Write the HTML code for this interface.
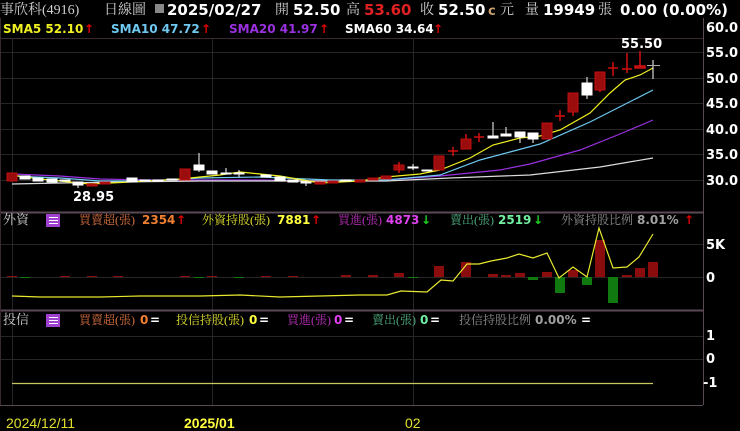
<!DOCTYPE html>
<html><head><meta charset="utf-8"><style>
html,body{margin:0;padding:0;background:#000;width:740px;height:431px;overflow:hidden}
svg{display:block}
text{font-family:"DejaVu Sans","Liberation Sans","Noto Sans CJK TC",sans-serif;font-weight:bold}
.c{font-family:"Liberation Serif","Noto Serif CJK SC","Noto Sans CJK TC",serif;font-weight:normal}
.d{font-family:"Liberation Sans Narrow","Liberation Sans",sans-serif;font-weight:normal}
</style></head><body>
<svg width="740" height="431" viewBox="0 0 740 431" xmlns="http://www.w3.org/2000/svg">
<rect width="740" height="431" fill="#000"/>
<!-- grid -->
<g stroke="#262626" stroke-width="1">
<line x1="0" y1="52.5" x2="703" y2="52.5"/><line x1="0" y1="78.5" x2="703" y2="78.5"/>
<line x1="0" y1="103.5" x2="703" y2="103.5"/><line x1="0" y1="129.5" x2="703" y2="129.5"/><line x1="0" y1="154.5" x2="703" y2="154.5"/><line x1="0" y1="180.5" x2="703" y2="180.5"/>
<line x1="0" y1="244.5" x2="703" y2="244.5"/><line x1="0" y1="277.5" x2="703" y2="277.5"/>
<line x1="0" y1="336.5" x2="703" y2="336.5"/><line x1="0" y1="359.5" x2="703" y2="359.5"/>
<line x1="12.5" y1="38" x2="12.5" y2="405"/><line x1="212.5" y1="38" x2="212.5" y2="405"/><line x1="413.5" y1="38" x2="413.5" y2="405"/>
</g>
<line x1="0" y1="38.5" x2="703" y2="38.5" stroke="#3a2a30"/>
<line x1="703.5" y1="18" x2="703.5" y2="405" stroke="#5a4a55"/>
<line x1="0" y1="212.5" x2="703" y2="212.5" stroke="#5a4a55" stroke-width="2"/>
<line x1="0" y1="310.5" x2="703" y2="310.5" stroke="#5a4a55" stroke-width="2"/>
<line x1="0" y1="405.5" x2="703" y2="405.5" stroke="#5a4a55"/>
<line x1="0.5" y1="18" x2="0.5" y2="405" stroke="#3a2a30"/>
<!-- header -->
<text x="0" y="14" class="c" font-size="14" fill="#cfcfcf">事欣科(4916)</text>
<text x="104" y="14" class="c" font-size="14" fill="#cfcfcf">日線圖</text>
<rect x="155" y="4" width="9" height="9" fill="#888"/>
<text x="167" y="15" font-size="15" fill="#fff">2025/02/27</text>
<text x="275" y="14" class="c" font-size="14" fill="#cfcfcf">開</text>
<text x="293" y="15" font-size="15" fill="#fff">52.50</text>
<text x="346" y="14" class="c" font-size="14" fill="#cfcfcf">高</text>
<text x="364" y="15" font-size="15" fill="#e02020">53.60</text>
<text x="420" y="14" class="c" font-size="14" fill="#cfcfcf">收</text>
<text x="438" y="15" font-size="15" fill="#fff">52.50</text>
<text x="488" y="15" font-size="13" fill="#c8a070">c</text>
<text x="500" y="14" class="c" font-size="14" fill="#cfcfcf">元</text>
<text x="525" y="14" class="c" font-size="14" fill="#cfcfcf">量</text>
<text x="543" y="15" font-size="15" fill="#fff">19949</text>
<text x="598" y="14" class="c" font-size="14" fill="#cfcfcf">張</text>
<text x="620" y="15" font-size="15" fill="#fff">0.00 (0.00%)</text>
<!-- SMA legend -->
<text x="3" y="33" font-size="12" fill="#f0f020">SMA5 52.10</text><text x="84" y="33" font-size="12" fill="#e00000">↑</text>
<text x="111" y="33" font-size="12" fill="#6ec8f0">SMA10 47.72</text><text x="201" y="33" font-size="12" fill="#e00000">↑</text>
<text x="229" y="33" font-size="12" fill="#9a30e0">SMA20 41.97</text><text x="319" y="33" font-size="12" fill="#e00000">↑</text>
<text x="345" y="33" font-size="12" fill="#fff">SMA60 34.64</text><text x="433" y="33" font-size="12" fill="#e00000">↑</text>
<!-- price axis -->
<g font-size="13" fill="#fff">
<text x="706" y="32">60.0</text><text x="706" y="57">55.0</text><text x="706" y="83">50.0</text><text x="706" y="108">45.0</text><text x="706" y="134">40.0</text><text x="706" y="159">35.0</text><text x="706" y="185">30.0</text>
<text x="706" y="249">5K</text><text x="706" y="282">0</text>
<text x="706" y="340">1</text><text x="706" y="363">0</text><text x="703" y="387">-1</text>
</g>
<!-- MAs -->
<polyline fill="none" stroke="#9a30e0" stroke-width="1.2" points="12,174 60,176 100,179 150,180 200,180 260,180 320,181 386,180 440,176 500,170 530,164 580,150 620,134 653,120"/>
<polyline fill="none" stroke="#ddd" stroke-width="1.2" points="12,184 60,183 120,182 200,181 300,181 386,181 450,178 530,175 600,167 653,158"/>
<polyline fill="none" stroke="#6ec8f0" stroke-width="1.2" points="12,176 60,178 100,181 150,181 200,178 260,177 330,180 386,180 440,175 480,160 510,152 540,144 590,122 653,90"/>
<polyline fill="none" stroke="#f0f020" stroke-width="1.2" points="12,175 40,179 90,184 130,182 180,179 220,175 240,172 280,176 320,183 360,181 386,177 420,174 440,170 470,158 493,145 520,138 540,136 560,130 590,113 610,93 625,80 640,75 653,68"/>
<!-- candles -->
<g fill="#9b0c0c" stroke="#c01010" stroke-width="1">
<rect x="7" y="173" width="10" height="8"/><rect x="87" y="184" width="10" height="2"/><rect x="100" y="182" width="10" height="2"/>
<rect x="180" y="169" width="10" height="11"/><rect x="315" y="182" width="10" height="2"/><rect x="328" y="181" width="10" height="2"/><rect x="355" y="180" width="10" height="2"/><rect x="368" y="178" width="10" height="2"/>
<rect x="381" y="176" width="10" height="3"/><rect x="394" y="165" width="10" height="5"/>
<rect x="434" y="156" width="10" height="14"/><rect x="461" y="139" width="10" height="10"/>
<rect x="542" y="123" width="10" height="16"/><rect x="568" y="93" width="10" height="19"/><rect x="595" y="72" width="10" height="18"/>
</g>
<g stroke="#d01010" stroke-width="1.5">
<line x1="399" y1="162" x2="399" y2="173"/><line x1="453" y1="147" x2="453" y2="156"/><line x1="448" y1="151" x2="458" y2="151"/>
<line x1="466" y1="134" x2="466" y2="139"/><line x1="479" y1="133" x2="479" y2="142"/><line x1="474" y1="137" x2="484" y2="137"/>
<line x1="560" y1="110" x2="560" y2="121"/><line x1="555" y1="116" x2="565" y2="116"/><line x1="573" y1="112" x2="573" y2="116"/>
<line x1="600" y1="90" x2="600" y2="92"/><line x1="613" y1="62" x2="613" y2="76"/><line x1="608" y1="68" x2="618" y2="68"/>
<line x1="627" y1="53" x2="627" y2="73"/><line x1="622" y1="69" x2="632" y2="69"/><line x1="640" y1="51" x2="640" y2="68"/><rect x="635" y="66" width="10" height="2" fill="#9b0c0c"/>
</g>
<g fill="#fff" stroke="#fff" stroke-width="1">
<rect x="20" y="176" width="10" height="3"/><rect x="33" y="178" width="10" height="3"/><rect x="47" y="179" width="10" height="3"/><rect x="60" y="180" width="10" height="1"/>
<rect x="73" y="182" width="10" height="3"/><line x1="78" y1="185" x2="78" y2="188"/>
<rect x="127" y="178" width="10" height="4"/><rect x="140" y="180" width="10" height="1"/><rect x="153" y="180" width="10" height="1"/><rect x="167" y="179" width="10" height="1"/>
<rect x="194" y="165" width="10" height="5"/><line x1="199" y1="153" x2="199" y2="172"/>
<rect x="207" y="171" width="10" height="3"/><line x1="226" y1="168" x2="226" y2="174"/><rect x="221" y="173" width="10" height="1"/>
<rect x="234" y="173" width="10" height="1"/><line x1="239" y1="170" x2="239" y2="177"/>
<rect x="261" y="175" width="10" height="2"/><rect x="275" y="177" width="10" height="4"/><rect x="288" y="180" width="10" height="2"/>
<rect x="301" y="182" width="10" height="1"/><line x1="306" y1="180" x2="306" y2="186"/><rect x="341" y="180" width="10" height="1"/>
<rect x="408" y="167" width="10" height="1"/><line x1="413" y1="164" x2="413" y2="170"/><rect x="422" y="170" width="10" height="1"/>
<rect x="488" y="136" width="10" height="2"/><line x1="493" y1="122" x2="493" y2="138"/>
<rect x="501" y="134" width="10" height="2"/><line x1="506" y1="127" x2="506" y2="136"/>
<rect x="515" y="132" width="10" height="5"/><line x1="520" y1="137" x2="520" y2="143"/>
<rect x="528" y="133" width="10" height="6"/><line x1="533" y1="139" x2="533" y2="143"/>
<rect x="582" y="83" width="10" height="12"/><line x1="587" y1="77" x2="587" y2="99"/>
<line x1="653" y1="60" x2="653" y2="79"/>
</g>
<line x1="647" y1="65.5" x2="660" y2="65.5" stroke="#aaa" stroke-width="1"/>
<text x="621" y="48" font-size="13" fill="#fff">55.50</text>
<text x="73" y="201" font-size="13" fill="#fff">28.95</text>
<!-- foreign panel -->
<text x="3" y="224" class="c" font-size="13" fill="#cfcfcf">外資</text>
<rect x="46" y="214" width="14" height="13" fill="#a040d0"/>
<g stroke="#fff" stroke-width="1"><line x1="49" y1="217.5" x2="58" y2="217.5"/><line x1="49" y1="220.5" x2="58" y2="220.5"/><line x1="49" y1="223.5" x2="58" y2="223.5"/></g>
<g font-size="12">
<text x="79" y="224" class="c" fill="#d87040">買賣超(張)</text><text x="142" y="224" fill="#f08030">2354</text><text x="176" y="224" fill="#e00000">↑</text>
<text x="202" y="224" class="c" fill="#e0e030">外資持股(張)</text><text x="277" y="224" fill="#ffff40">7881</text><text x="311" y="224" fill="#e00000">↑</text>
<text x="338" y="224" class="c" fill="#c030c0">買進(張)</text><text x="386" y="224" fill="#e040f0">4873</text><text x="421" y="224" fill="#20d020">↓</text>
<text x="450" y="224" class="c" fill="#50b080">賣出(張)</text><text x="498" y="224" fill="#70f0a0">2519</text><text x="533" y="224" fill="#20d020">↓</text>
<text x="561" y="224" class="c" fill="#909090">外資持股比例</text><text x="637" y="224" fill="#a0a0a0">8.01%</text><text x="684" y="224" fill="#e00000">↑</text>
</g>
<g fill="#8a0c0c">
<rect x="7" y="276" width="10" height="1"/><rect x="60" y="276" width="10" height="1"/><rect x="87" y="276" width="10" height="1"/><rect x="113" y="276" width="10" height="1"/><rect x="180" y="276" width="10" height="1"/><rect x="207" y="276" width="10" height="1"/><rect x="261" y="276" width="10" height="1"/><rect x="288" y="276" width="10" height="1"/><rect x="341" y="275" width="10" height="2"/><rect x="368" y="275" width="10" height="2"/><rect x="394" y="273" width="10" height="4"/>
<rect x="434" y="266" width="10" height="11"/><rect x="461" y="262" width="10" height="15"/><rect x="488" y="274" width="10" height="3"/><rect x="501" y="275" width="10" height="2"/><rect x="515" y="273" width="10" height="4"/><rect x="542" y="272" width="10" height="5"/><rect x="568" y="270" width="10" height="7"/><rect x="595" y="240" width="10" height="37"/><rect x="622" y="275" width="10" height="2"/><rect x="635" y="268" width="10" height="9"/><rect x="648" y="262" width="10" height="15"/>
</g>
<g fill="#107a10">
<rect x="20" y="277" width="10" height="1"/><rect x="194" y="277" width="10" height="1"/><rect x="234" y="277" width="10" height="1"/><rect x="408" y="277" width="10" height="1"/>
<rect x="528" y="277" width="10" height="3"/><rect x="555" y="277" width="10" height="16"/><rect x="582" y="277" width="10" height="8"/><rect x="608" y="277" width="10" height="26"/>
</g>
<polyline fill="none" stroke="#e8e830" stroke-width="1.2" points="12,296 40,297 100,297 140,296 200,296 240,295 280,297 320,296 360,295 387,295 401,291 427,292 441,280 453,281 467,264 479,264 491,261 507,258 519,254 533,258 547,253 559,278 573,267 587,277 599,228 613,268 627,267 639,257 653,234"/>
<!-- invest panel -->
<text x="3" y="324" class="c" font-size="13" fill="#cfcfcf">投信</text>
<rect x="46" y="314" width="14" height="13" fill="#a040d0"/>
<g stroke="#fff" stroke-width="1"><line x1="49" y1="317.5" x2="58" y2="317.5"/><line x1="49" y1="320.5" x2="58" y2="320.5"/><line x1="49" y1="323.5" x2="58" y2="323.5"/></g>
<g font-size="12">
<text x="79" y="324" class="c" fill="#d87040">買賣超(張)</text><text x="140" y="324" fill="#f08030">0</text><text x="150" y="324" fill="#fff">=</text>
<text x="176" y="324" class="c" fill="#e0e030">投信持股(張)</text><text x="249" y="324" fill="#ffff40">0</text><text x="259" y="324" fill="#fff">=</text>
<text x="287" y="324" class="c" fill="#c030c0">買進(張)</text><text x="334" y="324" fill="#e040f0">0</text><text x="344" y="324" fill="#fff">=</text>
<text x="372" y="324" class="c" fill="#50b080">賣出(張)</text><text x="420" y="324" fill="#70f0a0">0</text><text x="430" y="324" fill="#fff">=</text>
<text x="459" y="324" class="c" fill="#909090">投信持股比例</text><text x="535" y="324" fill="#a0a0a0">0.00%</text><text x="581" y="324" fill="#fff">=</text>
</g>
<line x1="12" y1="383.5" x2="653" y2="383.5" stroke="#c8c860" stroke-width="1.2"/>
<!-- dates -->
<text x="6" y="428" class="d" font-size="14" fill="#e0e030">2024/12/11</text>
<text x="184" y="428" class="d" font-size="14" font-weight="bold" fill="#ffff40" style="font-weight:bold">2025/01</text>
<text x="405" y="428" class="d" font-size="14" fill="#e0e030">02</text>
</svg>
</body></html>
